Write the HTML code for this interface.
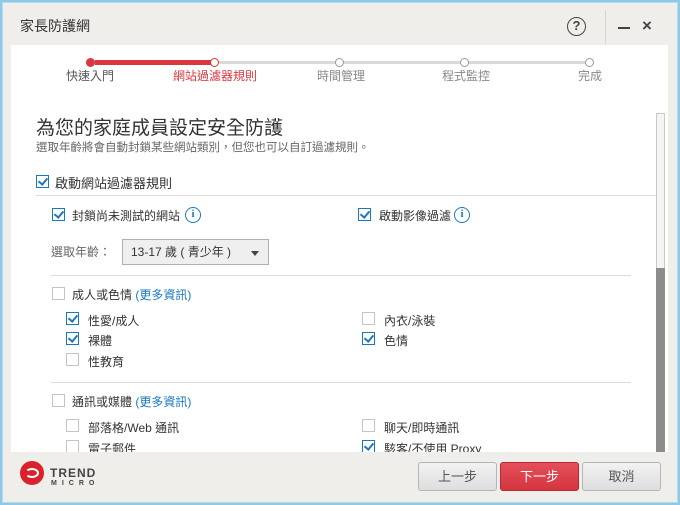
<!DOCTYPE html>
<html><head><meta charset="utf-8"><style>
*{margin:0;padding:0;box-sizing:border-box}
body{width:680px;height:505px;overflow:hidden;background:#8ccbe8;font-family:"Liberation Sans","Noto Sans CJK TC",sans-serif;color:#333;position:relative}
.win{position:absolute;left:2px;top:2px;width:676px;height:501px;background:#efeeeb;border:1px solid #b9d9ea}
.a{position:absolute;white-space:nowrap}
.cb{position:absolute;width:13px;height:13px;border:1px solid #c4c4c4;background:#fff}
.cb.on{border-color:#1a78c2}
.cb.on::after{content:"";position:absolute;left:3px;top:0px;width:4px;height:7px;border-right:2px solid #1a78c2;border-bottom:2px solid #1a78c2;transform:rotate(40deg)}
.t{font-size:12px;color:#333}
.link{color:#1a78c2}
.hr{position:absolute;height:1px;background:#dcdcdc}
.info{position:absolute;width:16px;height:16px;border:1.5px solid #1a78c2;border-radius:50%;color:#1a78c2;font:bold 11px "Liberation Serif",serif;text-align:center;line-height:13px}
.btn{position:absolute;top:462px;width:79px;height:29px;border:1px solid #b5b5b5;border-radius:3px;background:linear-gradient(#f2f2f2,#dedede);font-size:13px;color:#555;text-align:center;line-height:27px}
</style></head><body>
<div class="win"></div>
<div class="a" style="left:20px;top:16px;font-size:14px;color:#333">家長防護網</div>
<div class="a" style="left:567px;top:17px;width:19px;height:19px;border:1.6px solid #444;border-radius:50%;text-align:center;font-size:13px;line-height:16px;font-weight:bold;color:#444">?</div>
<div class="a" style="left:605px;top:10px;width:1px;height:34px;background:#d4d4d4"></div>
<div class="a" style="left:618px;top:27px;width:12px;height:2px;background:#444"></div>
<div class="a" style="left:642px;top:16px;font-size:17px;font-weight:bold;color:#444">×</div>
<!-- content -->
<div class="a" style="left:11px;top:45px;width:657px;height:407px;background:#fff;overflow:hidden">
 <div class="a" style="left:84px;top:15px;width:120px;height:5px;background:#d9373f"></div>
 <div class="a" style="left:208px;top:16px;width:370px;height:3px;background:#d9d9d9"></div>
 <div class="a" style="left:75px;top:13px;width:9px;height:9px;border-radius:50%;background:#d9373f"></div>
 <div class="a" style="left:199px;top:13px;width:9px;height:9px;border-radius:50%;background:#fff;border:1.5px solid #d9373f"></div>
 <div class="a" style="left:324px;top:13px;width:9px;height:9px;border-radius:50%;background:#fff;border:1px solid #999"></div>
 <div class="a" style="left:449px;top:13px;width:9px;height:9px;border-radius:50%;background:#fff;border:1px solid #999"></div>
 <div class="a" style="left:574px;top:13px;width:9px;height:9px;border-radius:50%;background:#fff;border:1px solid #999"></div>
 <div class="a t" style="left:55px;top:22px;color:#555">快速入門</div>
 <div class="a t" style="left:162px;top:22px;color:#d9373f">網站過濾器規則</div>
 <div class="a t" style="left:306px;top:22px;color:#888">時間管理</div>
 <div class="a t" style="left:431px;top:22px;color:#888">程式監控</div>
 <div class="a t" style="left:567px;top:22px;color:#888">完成</div>
 <div class="a" style="left:25px;top:68px;font-size:19px;color:#333">為您的家庭成員設定安全防護</div>
 <div class="a" style="left:25px;top:94px;font-size:11.5px;color:#666">選取年齡將會自動封鎖某些網站類別，但您也可以自訂過濾規則。</div>
 <div class="cb on" style="left:25px;top:130px"></div>
 <div class="a" style="left:44px;top:128px;font-size:13px">啟動網站過濾器規則</div>
 <div class="hr" style="left:25px;top:150px;width:624px"></div>
 <div class="cb on" style="left:41px;top:163px"></div>
 <div class="a t" style="left:61px;top:162px">封鎖尚未測試的網站</div>
 <div class="info" style="left:174px;top:162px">i</div>
 <div class="cb on" style="left:347px;top:163px"></div>
 <div class="a t" style="left:368px;top:162px">啟動影像過濾</div>
 <div class="info" style="left:443px;top:162px">i</div>
 <div class="a t" style="left:40px;top:198px;color:#666">選取年齡：</div>
 <div class="a" style="left:111px;top:194px;width:147px;height:26px;border:1px solid #b0b0b0;background:#efefef;font-size:12px;line-height:24px;padding-left:8px">13-17 歲 ( 青少年 )</div>
 <div class="a" style="left:240px;top:206px;width:0;height:0;border-left:4px solid transparent;border-right:4px solid transparent;border-top:5px solid #444"></div>
 <div class="hr" style="left:40px;top:230px;width:580px"></div>
 <div class="cb" style="left:41px;top:242px"></div>
 <div class="a t" style="left:61px;top:241px">成人或色情 <span class="link">(更多資訊)</span></div>
 <div class="cb on" style="left:55px;top:267px"></div>
 <div class="a t" style="left:77px;top:267px">性愛/成人</div>
 <div class="cb" style="left:351px;top:267px"></div>
 <div class="a t" style="left:373px;top:267px">內衣/泳裝</div>
 <div class="cb on" style="left:55px;top:287px"></div>
 <div class="a t" style="left:77px;top:287px">裸體</div>
 <div class="cb on" style="left:351px;top:287px"></div>
 <div class="a t" style="left:373px;top:287px">色情</div>
 <div class="cb" style="left:55px;top:308px"></div>
 <div class="a t" style="left:77px;top:308px">性教育</div>
 <div class="hr" style="left:40px;top:337px;width:580px"></div>
 <div class="cb" style="left:41px;top:349px"></div>
 <div class="a t" style="left:61px;top:348px">通訊或媒體 <span class="link">(更多資訊)</span></div>
 <div class="cb" style="left:55px;top:374px"></div>
 <div class="a t" style="left:77px;top:374px">部落格/Web 通訊</div>
 <div class="cb" style="left:351px;top:374px"></div>
 <div class="a t" style="left:373px;top:374px">聊天/即時通訊</div>
 <div class="cb" style="left:55px;top:395px"></div>
 <div class="a t" style="left:77px;top:395px">電子郵件</div>
 <div class="cb on" style="left:351px;top:395px"></div>
 <div class="a t" style="left:373px;top:395px">駭客/不使用 Proxy</div>
 <div class="a" style="left:645px;top:68px;width:9px;height:339px;border:1px solid #c8c8c8;background:#f5f5f5"></div>
 <div class="a" style="left:645px;top:223px;width:9px;height:184px;background:#8c8c8c"></div>
</div>
<!-- logo -->
<div class="a" style="left:20px;top:461px;width:24px;height:24px;border-radius:50%;background:#d9222a"></div>
<div class="a" style="left:25px;top:468px;width:14px;height:10px;border:2px solid #fff;border-radius:50%;border-left-color:transparent"></div>
<div class="a" style="left:50px;top:466px;font:bold 12px 'Liberation Sans',sans-serif;color:#444;letter-spacing:1px">TREND</div>
<div class="a" style="left:51px;top:480px;font:bold 7px 'Liberation Sans',sans-serif;color:#444;letter-spacing:5px">MICRO</div>
<div class="btn" style="left:418px">上一步</div>
<div class="btn" style="left:500px;background:linear-gradient(#e4505a,#d5353f);border-color:#b82a33;color:#fff">下一步</div>
<div class="btn" style="left:582px">取消</div>
</body></html>
